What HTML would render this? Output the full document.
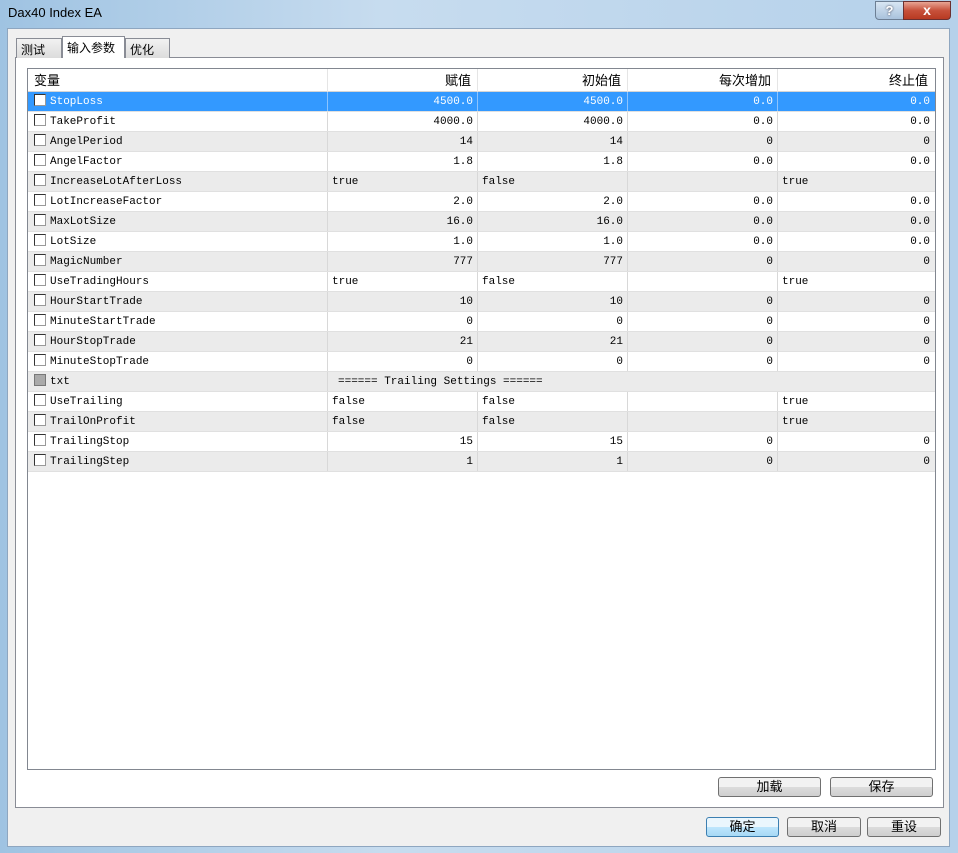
<!DOCTYPE html><html><head><meta charset="utf-8"><style>
*{margin:0;padding:0;box-sizing:border-box}
body{width:958px;height:853px;overflow:hidden;background:linear-gradient(90deg,#9fc3e2,#c7dcef 40%,#b5d1ea);font-family:"Liberation Sans","Noto Sans CJK SC",sans-serif;font-size:12px;position:relative}
.abs{position:absolute}
.client{left:7px;top:28px;width:943px;height:819px;background:#f0f0f0;border:1px solid #8ea6c0}
.panel{left:15px;top:57px;width:929px;height:751px;background:#fff;border:1px solid #898c95}
.tab{top:38px;height:20px;border:1px solid #898c95;border-bottom:none;background:linear-gradient(#f2f2f2,#dcdcdc);padding:2px 4px;font-size:12px}
.list{left:27px;top:68px;width:909px;height:702px;border:1px solid #828790;background:#fff;overflow:hidden}
.row{position:absolute;left:0;width:907px;height:20px;border-bottom:1px solid #e0e0e0;font-family:"Liberation Mono","Noto Sans CJK SC",monospace;font-size:11px}
.row div{position:absolute;top:0;height:19px;line-height:21px;border-right:1px solid #d8d8d8;padding:0 4px;white-space:pre}
.c0{left:0;width:300px}.c1{left:300px;width:150px}.c2{left:450px;width:150px}.c3{left:600px;width:150px}.c4{left:750px;width:156px;border-right:none!important}
.r{text-align:right}
.g{background:#ebebeb}
.sel{background:#3399ff;color:#fff}
.sel div{border-right-color:#8cc4ff}
.cb{display:inline-block;width:12px;height:12px;border:1px solid #333;border-right-color:#999;border-bottom-color:#999;background:#fff;vertical-align:-2px;margin:0 4px 0 2px}
.hdr{position:absolute;left:0;top:0;width:907px;height:23px;background:#fff;border-bottom:1px solid #d5d5d5;font-size:13px}
.hdr div{position:absolute;top:0;height:23px;line-height:23px;border-right:1px solid #e5e5e5;padding:0 6px}
.btn{height:20px;border:1px solid #707070;border-radius:3px;background:linear-gradient(#f2f2f2 50%,#dcdcdc 50%,#cfcfcf);text-align:center;line-height:18px;font-size:13px}
</style></head><body>
<div class="abs" style="left:8px;top:5px;font-size:13px;color:#000">Dax40 Index EA</div>
<div class="abs" style="left:875px;top:1px;width:29px;height:19px;border:1px solid #6d7f94;border-radius:0 0 0 4px;background:linear-gradient(#d8e6f3,#a9c2dc);text-align:center;color:#fff;font-weight:bold;font-size:13px;line-height:17px;text-shadow:0 0 2px #334">?</div>
<div class="abs" style="left:903px;top:1px;width:48px;height:19px;border:1px solid #6b3030;border-radius:0 0 4px 0;background:linear-gradient(#e8a594,#c7513b 50%,#b83a22);text-align:center;color:#fff;font-weight:bold;font-size:14px;line-height:17px">x</div>
<div class="abs client"></div>
<div class="abs panel"></div>
<div class="abs tab" style="left:16px;width:46px">测试</div>
<div class="abs tab" style="left:62px;top:36px;height:22px;width:63px;background:#fff;z-index:2">输入参数</div>
<div class="abs tab" style="left:125px;width:45px">优化</div>
<div class="abs list">
<div class="hdr"><div style="left:0;width:300px">变量</div><div class="r" style="left:300px;width:150px">赋值</div><div class="r" style="left:450px;width:150px">初始值</div><div class="r" style="left:600px;width:150px">每次增加</div><div class="r" style="left:750px;width:156px;border:none">终止值</div></div>
<div class="row sel" style="top:23px"><div class="c0"><span class="cb"></span>StopLoss</div><div class="c1 r">4500.0</div><div class="c2 r">4500.0</div><div class="c3 r">0.0</div><div class="c4 r">0.0</div></div>
<div class="row" style="top:43px"><div class="c0"><span class="cb"></span>TakeProfit</div><div class="c1 r">4000.0</div><div class="c2 r">4000.0</div><div class="c3 r">0.0</div><div class="c4 r">0.0</div></div>
<div class="row g" style="top:63px"><div class="c0"><span class="cb"></span>AngelPeriod</div><div class="c1 r">14</div><div class="c2 r">14</div><div class="c3 r">0</div><div class="c4 r">0</div></div>
<div class="row" style="top:83px"><div class="c0"><span class="cb"></span>AngelFactor</div><div class="c1 r">1.8</div><div class="c2 r">1.8</div><div class="c3 r">0.0</div><div class="c4 r">0.0</div></div>
<div class="row g" style="top:103px"><div class="c0"><span class="cb"></span>IncreaseLotAfterLoss</div><div class="c1">true</div><div class="c2">false</div><div class="c3"></div><div class="c4">true</div></div>
<div class="row" style="top:123px"><div class="c0"><span class="cb"></span>LotIncreaseFactor</div><div class="c1 r">2.0</div><div class="c2 r">2.0</div><div class="c3 r">0.0</div><div class="c4 r">0.0</div></div>
<div class="row g" style="top:143px"><div class="c0"><span class="cb"></span>MaxLotSize</div><div class="c1 r">16.0</div><div class="c2 r">16.0</div><div class="c3 r">0.0</div><div class="c4 r">0.0</div></div>
<div class="row" style="top:163px"><div class="c0"><span class="cb"></span>LotSize</div><div class="c1 r">1.0</div><div class="c2 r">1.0</div><div class="c3 r">0.0</div><div class="c4 r">0.0</div></div>
<div class="row g" style="top:183px"><div class="c0"><span class="cb"></span>MagicNumber</div><div class="c1 r">777</div><div class="c2 r">777</div><div class="c3 r">0</div><div class="c4 r">0</div></div>
<div class="row" style="top:203px"><div class="c0"><span class="cb"></span>UseTradingHours</div><div class="c1">true</div><div class="c2">false</div><div class="c3"></div><div class="c4">true</div></div>
<div class="row g" style="top:223px"><div class="c0"><span class="cb"></span>HourStartTrade</div><div class="c1 r">10</div><div class="c2 r">10</div><div class="c3 r">0</div><div class="c4 r">0</div></div>
<div class="row" style="top:243px"><div class="c0"><span class="cb"></span>MinuteStartTrade</div><div class="c1 r">0</div><div class="c2 r">0</div><div class="c3 r">0</div><div class="c4 r">0</div></div>
<div class="row g" style="top:263px"><div class="c0"><span class="cb"></span>HourStopTrade</div><div class="c1 r">21</div><div class="c2 r">21</div><div class="c3 r">0</div><div class="c4 r">0</div></div>
<div class="row" style="top:283px"><div class="c0"><span class="cb"></span>MinuteStopTrade</div><div class="c1 r">0</div><div class="c2 r">0</div><div class="c3 r">0</div><div class="c4 r">0</div></div>
<div class="row g" style="top:303px"><div class="c0"><span class="cb" style="background:#aaa;border-color:#777"></span>txt</div><div style="left:300px;width:607px;border:none;padding-left:10px">====== Trailing Settings ======</div></div>
<div class="row" style="top:323px"><div class="c0"><span class="cb"></span>UseTrailing</div><div class="c1">false</div><div class="c2">false</div><div class="c3"></div><div class="c4">true</div></div>
<div class="row g" style="top:343px"><div class="c0"><span class="cb"></span>TrailOnProfit</div><div class="c1">false</div><div class="c2">false</div><div class="c3"></div><div class="c4">true</div></div>
<div class="row" style="top:363px"><div class="c0"><span class="cb"></span>TrailingStop</div><div class="c1 r">15</div><div class="c2 r">15</div><div class="c3 r">0</div><div class="c4 r">0</div></div>
<div class="row g" style="top:383px"><div class="c0"><span class="cb"></span>TrailingStep</div><div class="c1 r">1</div><div class="c2 r">1</div><div class="c3 r">0</div><div class="c4 r">0</div></div>
</div>
<div class="abs btn" style="left:718px;top:777px;width:103px">加载</div>
<div class="abs btn" style="left:830px;top:777px;width:103px">保存</div>
<div class="abs btn" style="left:706px;top:817px;width:73px;border-color:#3c7fb1;background:linear-gradient(#eaf6fd 50%,#bee6fd 50%,#a7d9f5)">确定</div>
<div class="abs btn" style="left:787px;top:817px;width:74px">取消</div>
<div class="abs btn" style="left:867px;top:817px;width:74px">重设</div>
</body></html>
